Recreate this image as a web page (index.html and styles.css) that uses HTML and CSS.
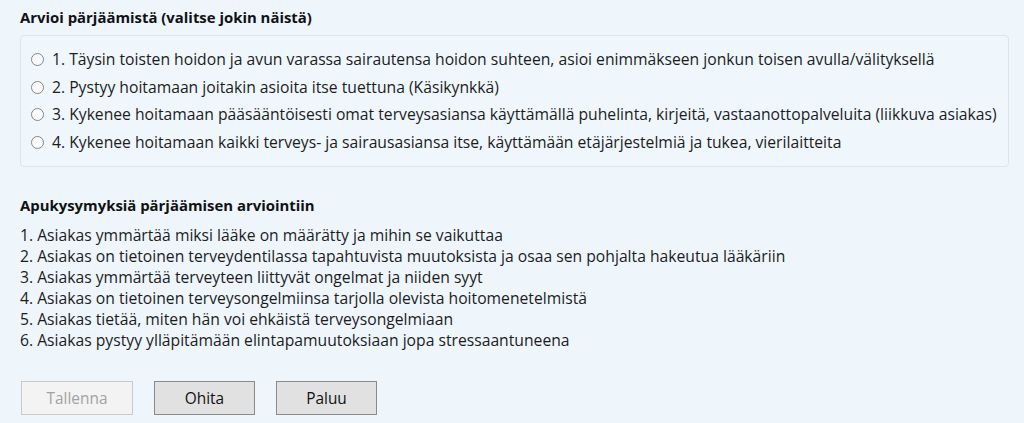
FILE: index.html
```html
<!DOCTYPE html>
<html lang="fi">
<head>
<meta charset="utf-8">
<link rel="stylesheet" href="styles.css">
</head>
<body>
<div class="page">
  <h2 class="heading">Arvioi pärjäämistä (valitse jokin näistä)</h2>
  <div class="box">
    <label class="opt"><span class="radio"></span><span>1. Täysin toisten hoidon ja avun varassa sairautensa hoidon suhteen, asioi enimmäkseen jonkun toisen avulla/välityksellä</span></label>
    <label class="opt"><span class="radio"></span><span>2. Pystyy hoitamaan joitakin asioita itse tuettuna (Käsikynkkä)</span></label>
    <label class="opt"><span class="radio"></span><span>3. Kykenee hoitamaan pääsääntöisesti omat terveysasiansa käyttämällä puhelinta, kirjeitä, vastaanottopalveluita (liikkuva asiakas)</span></label>
    <label class="opt"><span class="radio"></span><span>4. Kykenee hoitamaan kaikki terveys- ja sairausasiansa itse, käyttämään etäjärjestelmiä ja tukea, vierilaitteita</span></label>
  </div>
  <h2 class="heading sub">Apukysymyksiä pärjäämisen arviointiin</h2>
  <ul class="list">
    <li>1. Asiakas ymmärtää miksi lääke on määrätty ja mihin se vaikuttaa</li>
    <li>2. Asiakas on tietoinen terveydentilassa tapahtuvista muutoksista ja osaa sen pohjalta hakeutua lääkäriin</li>
    <li>3. Asiakas ymmärtää terveyteen liittyvät ongelmat ja niiden syyt</li>
    <li>4. Asiakas on tietoinen terveysongelmiinsa tarjolla olevista hoitomenetelmistä</li>
    <li>5. Asiakas tietää, miten hän voi ehkäistä terveysongelmiaan</li>
    <li>6. Asiakas pystyy ylläpitämään elintapamuutoksiaan jopa stressaantuneena</li>
  </ul>
  <div class="buttons">
    <button class="btn btn-save" disabled>Tallenna</button>
    <button class="btn btn-skip">Ohita</button>
    <button class="btn btn-back">Paluu</button>
  </div>
</div>
</body>
</html>
```
FILE: styles.css
```css
html, body {
  margin: 0;
  padding: 0;
  background: #eef6fc;
}
body {
  font-family: "Open Sans", "Noto Sans", sans-serif;
  font-size: 15.7px;
  line-height: 21px;
  color: #1c1c1c;
}
.page {
  padding: 8px 15px 0 20px;
}
.heading {
  margin: 0;
  font-size: 14.9px;
  font-weight: 700;
  line-height: 18px;
  color: #111;
}
.box {
  margin-top: 9px;
  border: 1px solid #dce5ee;
  border-radius: 4px;
  background: #eff7fd;
  padding: 10px 0 10px 10px;
  display: flex;
  flex-direction: column;
}
.opt {
  display: flex;
  align-items: center;
  gap: 8px;
  height: 27.5px;
  white-space: nowrap;
}
.radio {
  width: 11px;
  height: 11px;
  border: 1px solid #858585;
  border-radius: 50%;
  background: #fafafa;
  flex: none;
}
.sub {
  margin-top: 29px;
}
.list {
  list-style: none;
  margin: 11px 0 0;
  padding: 0;
}
.list li {
  line-height: 21px;
}
.buttons {
  margin-top: 30px;
  display: flex;
  gap: 21px;
  padding-left: 1px;
}
.btn {
  height: 34px;
  font-family: inherit;
  font-size: 15.4px;
  padding: 0;
  border-radius: 0;
}
.btn-save {
  width: 112px;
  background: #f3f3f3;
  border: 1px solid #c9c9c9;
  color: #a2a2a2;
}
.btn-skip, .btn-back {
  width: 101px;
  background: #e1e1e1;
  border: 1px solid #8a8a8a;
  color: #111;
}
```
